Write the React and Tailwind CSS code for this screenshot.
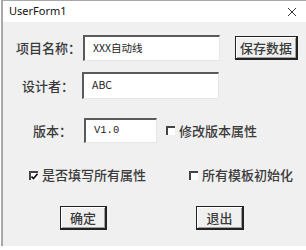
import React from "react";

const cjk = { fontFamily: '"Noto Sans CJK SC", "Noto Sans", sans-serif' };

const TextBox = ({ w, h, value, mono }) => (
  <div
    className={`${w} ${h} bg-white border-t-2 border-l-2 border-t-[#5a5a5a] border-l-[#5a5a5a] border-r border-b border-r-[#e6e6e6] border-b-[#e6e6e6] pl-[8px] pt-[3px] text-[10.5px] leading-[15px] text-[#222]`}
    style={mono ? { fontFamily: '"Liberation Mono", "Noto Sans CJK SC", monospace' } : cjk}
  >
    {value}
  </div>
);

const CheckBox = ({ checked }) => (
  <div className="w-[9px] h-[9px] bg-white border-t-2 border-l-2 border-t-[#444] border-l-[#444] flex items-center justify-center">
    {checked && (
      <svg width="7" height="7" viewBox="0 0 7 7">
        <path d="M0.5 3.5 L2.5 5.5 L6.5 0.8" stroke="#111" strokeWidth="1.6" fill="none" />
      </svg>
    )}
  </div>
);

const Button = ({ w, children }) => (
  <div
    className={`${w} h-[24px] bg-[#f0f0f0] border border-[#222] border-r-2 border-b-2 shadow-[inset_1px_1px_0_#ffffff,inset_-1px_-1px_0_#a0a0a0] flex items-center justify-center text-[13px] font-medium text-[#3a3a3a]`}
    style={cjk}
  >
    {children}
  </div>
);

export default function App() {
  return (
    <div className="w-[306px] h-[250px] bg-white overflow-hidden">
      <div className="ml-[1px] w-[310px] h-[246px] border-l-2 border-t border-[#a8a8a8] bg-[#f0f0f0] flex flex-col">
        <div className="h-[21px] bg-white flex items-center justify-between pl-[6px] pr-[14px]">
          <span className="text-[11px] text-[#111]" style={{ fontFamily: '"Noto Sans", "Open Sans", sans-serif' }}>
            UserForm1
          </span>
          <svg width="10" height="10" viewBox="0 0 10 10">
            <path d="M1 1 L9 9 M9 1 L1 9" stroke="#333" strokeWidth="1" />
          </svg>
        </div>

        <div className="flex items-center h-[26px] mt-[13px]">
          <div className="w-[67px] ml-[13px] text-[13px] font-medium text-[#3a3a3a]" style={cjk}>项目名称：</div>
          <TextBox w="w-[137px]" h="h-[26px]" value="XXX自动线" />
          <div className="ml-[15px]">
            <Button w="w-[63px]">保存数据</Button>
          </div>
        </div>

        <div className="flex items-center h-[27px] mt-[11px]">
          <div className="w-[60px] ml-[19px] text-[13px] font-medium text-[#3a3a3a]" style={cjk}>设计者：</div>
          <TextBox w="w-[137px]" h="h-[27px]" value="ABC" />
        </div>

        <div className="flex items-center h-[25px] mt-[19px]">
          <div className="w-[51px] ml-[30px] text-[13px] font-medium text-[#3a3a3a]" style={cjk}>版本：</div>
          <TextBox w="w-[73px]" h="h-[25px]" value="V1.0" mono />
          <div className="ml-[9px] flex items-center gap-[4px]">
            <CheckBox />
            <span className="text-[13px] font-medium text-[#3a3a3a]" style={cjk}>修改版本属性</span>
          </div>
        </div>

        <div className="flex items-center h-[16px] mt-[24px]">
          <div className="ml-[26px] flex items-center gap-[4px]">
            <CheckBox checked />
            <span className="text-[13px] font-medium text-[#3a3a3a]" style={cjk}>是否填写所有属性</span>
          </div>
          <div className="ml-[43px] flex items-center gap-[4px]">
            <CheckBox />
            <span className="text-[13px] font-medium text-[#3a3a3a]" style={cjk}>所有模板初始化</span>
          </div>
        </div>

        <div className="flex items-center h-[24px] mt-[23px]">
          <div className="ml-[57px]">
            <Button w="w-[47px]">确定</Button>
          </div>
          <div className="ml-[89px]">
            <Button w="w-[48px]">退出</Button>
          </div>
        </div>
      </div>
    </div>
  );
}
